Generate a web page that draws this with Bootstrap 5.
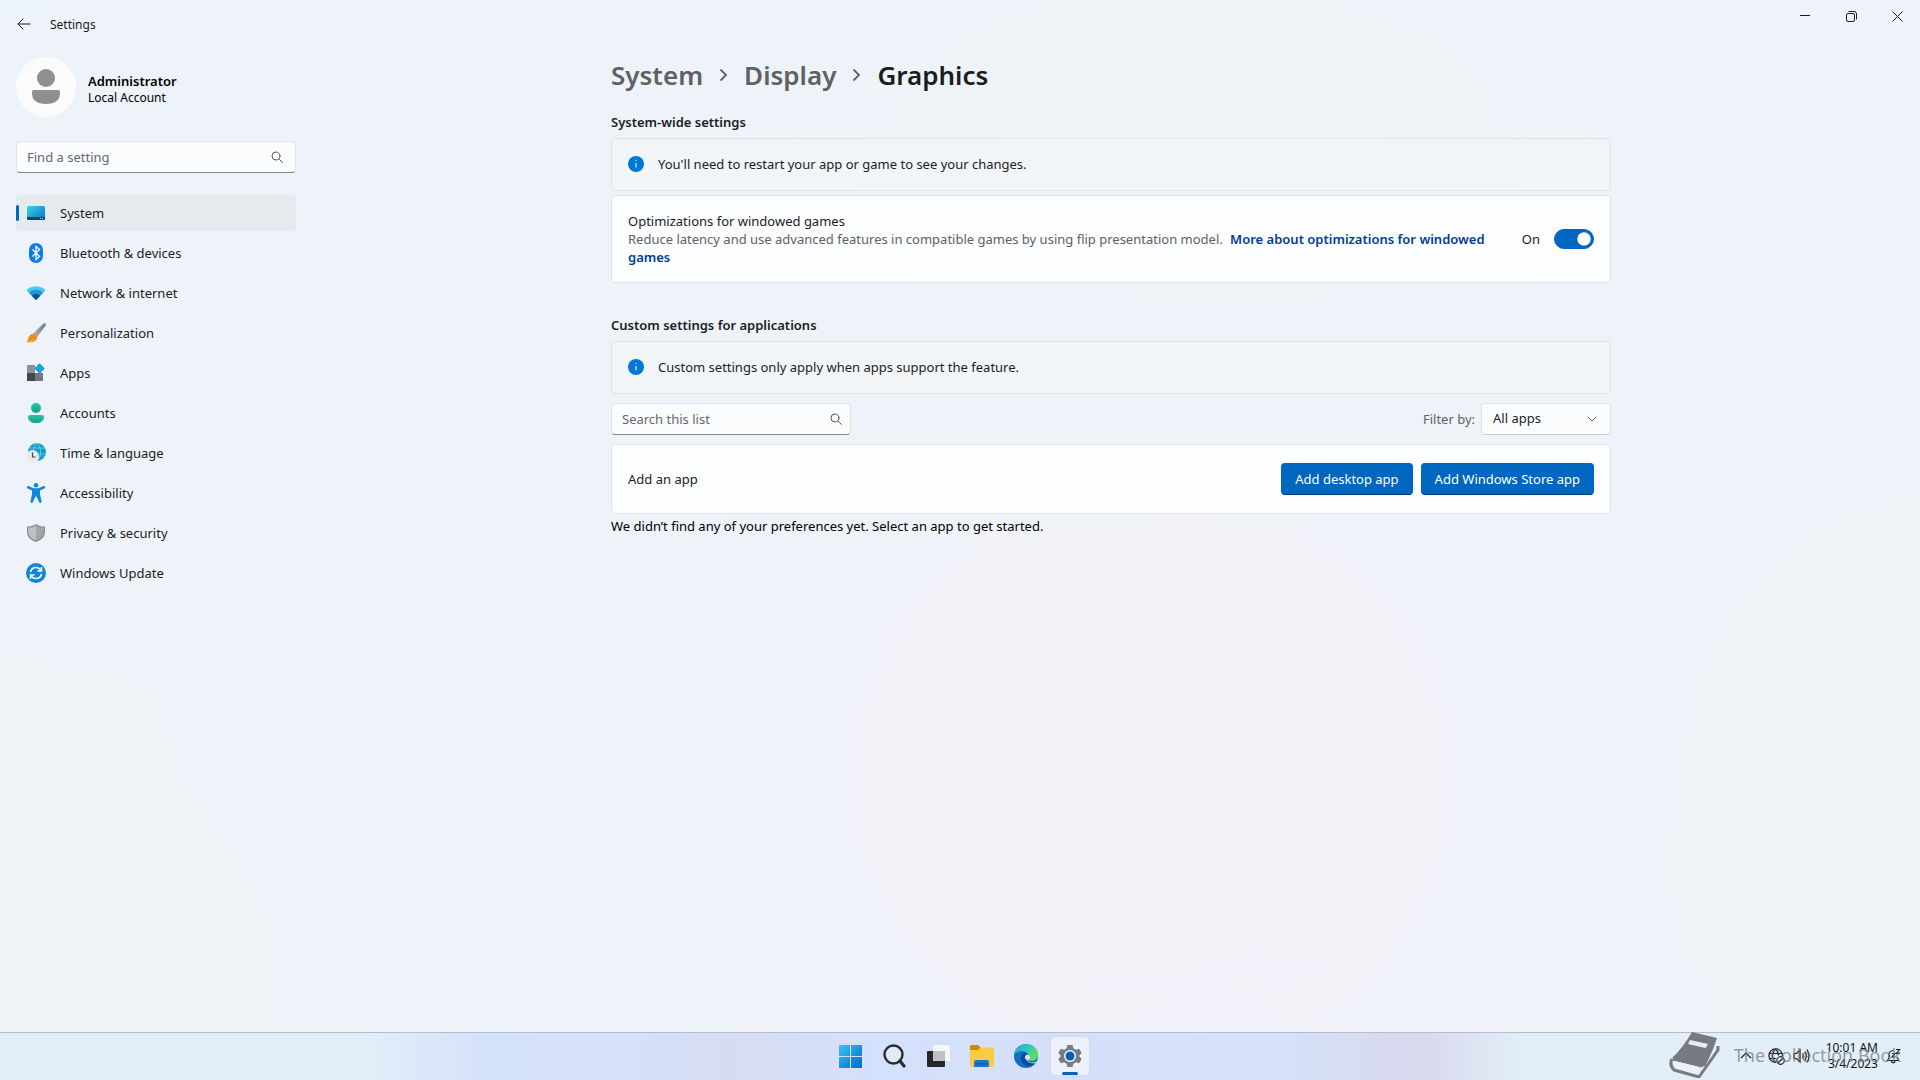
<!DOCTYPE html>
<html lang="en">
<head>
<meta charset="utf-8">
<meta name="viewport" content="width=device-width, initial-scale=1">
<title>Settings</title>
<link href="https://cdn.jsdelivr.net/npm/bootstrap@5.3.0/dist/css/bootstrap.min.css" rel="stylesheet">
<style>
  :root { --accent: #0067c0; --ink: #1b1c1e; --soft: #5f6164; --line: #dfe4e9; }
  body {
    font-family: "Noto Sans", "Open Sans", sans-serif; font-size: 13px; line-height: 20px; color: var(--ink);
    background:
      radial-gradient(ellipse 30% 50% at 60% 72%, #f2f2f7 0%, rgba(242,242,247,0) 100%),
      radial-gradient(ellipse 22% 45% at 0% 95%, #eef4f7 30%, rgba(238,244,247,0) 100%),
      radial-gradient(ellipse 20% 50% at 100% 80%, #eff4f7 30%, rgba(239,244,247,0) 100%),
      radial-gradient(ellipse 26% 22% at 62% 12%, #eff4f7 20%, rgba(239,244,247,0) 100%),
      linear-gradient(170deg, #edf3fa 0%, #eef3f9 40%, #f0f3fb 100%);
  }
  svg { display: block; flex: none; }
  .app-title { font-size: 12px; line-height: 16px; padding: 17px 0 0 18px; }
  .title-bar { height: 49px; padding: 0 16px; }
  .back-btn, .win-btn { border: 0; background: none; padding: 0; color: var(--ink); }
  .back-btn { width: 16px; height: 48px; }
  .win-btn { width: 46px; height: 32px; display: flex; align-items: center; justify-content: center; }
  .window-buttons { margin-right: -16px; }
  .side { width: 302px; padding: 8px 6px 0 16px; flex: none; }
  .avatar { width: 60px; height: 60px; background: #fbfbfc; }
  .side .user-name { font-weight: 600; color: #000; line-height: 18px; }
  .side .user-kind { font-size: 12px; color: #000; line-height: 16px; }
  .form-control, .form-select {
    height: 32px; font-size: 13px; border: 1px solid var(--line); border-radius: 4px; background-color: #fbfcfe; color: var(--ink);
  }
  .form-control { padding: 4px 34px 4px 10px; border-bottom-color: #868a8f; }
  .form-control::placeholder { color: #65686c; opacity: 1; }
  .form-select { width: 130px; padding: 4px 32px 4px 11px; border-bottom-color: #c8ccd1; background-image: none; }
  .field-icon { position: absolute; right: 13px; top: 10px; pointer-events: none; color: #55585c; }
  .side .search-field { width: 280px; margin-top: 24px; }
  .list-search { width: 240px; }
  .list-search .field-icon { right: 9px; }
  .side .nav { margin-top: 22px; gap: 4px; width: 280px; }
  .side .nav-link { height: 36px; padding: 0 10px; gap: 14px; color: var(--ink); border-radius: 4px; }
  .side .nav-pills .nav-link.active { background: #e5eaee; color: var(--ink); position: relative; }
  .side .nav-link.active::before { content: ""; position: absolute; left: 0; top: 10px; width: 3px; height: 16px; border-radius: 2px; background: var(--accent); }
  .page-body { max-width: 1000px; }
  .breadcrumb { font-size: 26px; line-height: 36px; font-weight: 600; margin: 8px 0 19px; gap: 16px; }
  .breadcrumb a { color: var(--soft); text-decoration: none; font-weight: 600; }
  .section-name { font-size: 13px; line-height: 20px; font-weight: 600; margin: 0 0 6px; }
  .info-bar, .setting-card { border: 1px solid var(--line); border-radius: 4px; }
  .info-bar { background: rgba(243,245,246,.7); height: 53px; padding: 0 16px 2px; gap: 14px; }
  .setting-card { background: rgba(255,255,255,.8); padding: 16px; }
  .setting-card.add-card { padding: 18px 16px; }
  .setting-name { line-height: 18px; }
  .setting-note { color: var(--soft); line-height: 18px; }
  .setting-note a { color: #003e92; font-weight: 600; text-decoration: none; margin-left: 4px; }
  .switch-row { gap: 14px; }
  .filter-row { gap: 6px; padding: 9px 0; }
  .filter-row label { color: var(--soft); }
  .empty-note { color: #000; margin: 0; padding-top: 2px; }
  .form-switch .form-check-input { width: 40px; height: 20px; margin: 0; float: none; border-color: var(--accent); background-color: var(--accent); }
  .btn-primary {
    --bs-btn-bg: #0067c0; --bs-btn-border-color: #0067c0; --bs-btn-border-radius: 4px;
    height: 32px; font-size: 13px; line-height: 20px; padding: 5px 13px; border-bottom-color: #003e73;
  }
  .taskbar {
    height: 48px; border-top: 1px solid #b4bfcc;
    background: linear-gradient(90deg, #e3eff8 0%, #e3eef8 19%, #d5e2fb 25%, #d5e0fa 33%, #d7dcf3 38%, #d4e1fc 46%, #d6dff8 55%, #d5e1fb 66%, #d8d9ec 74%, #e2edf7 79%, #e3eff8 100%);
  }
  .task-btn { width: 44px; height: 46px; border: 0; background: none; padding: 0; display: flex; align-items: center; justify-content: center; position: relative; }
  .task-btn .tile { width: 38px; height: 38px; border-radius: 4px; display: flex; align-items: center; justify-content: center; }
  .task-btn.running .tile { background: #ebf0fb; box-shadow: 0 0 1px #aab4c8; }
  .task-btn.running::after { content: ""; position: absolute; left: 14px; bottom: 4px; width: 16px; height: 3px; border-radius: 2px; background: var(--accent); }
  .tray { padding: 7px 19px 0 0; gap: 8px; }
  .tray-clock { font-size: 12px; line-height: 16px; text-align: right; color: #10131a; }
  .stamp { position: absolute; right: 19px; bottom: 2px; color: #777b80; pointer-events: none; gap: 14px; }
  .stamp span { font-size: 18px; line-height: 24px; opacity: .72; }
</style>
<script src="https://cdn.jsdelivr.net/npm/bootstrap@5.3.0/dist/js/bootstrap.bundle.min.js"></script>
</head>
<body class="d-flex flex-column vh-100 overflow-hidden">

<header class="title-bar d-flex align-items-start">
  <button class="back-btn d-flex align-items-center justify-content-center" type="button" aria-label="Back">
    <svg width="14" height="12" viewBox="0 0 14 12" fill="none" stroke="currentColor" stroke-linecap="round" stroke-linejoin="round"><path d="M6 1 1 6l5 5M1 6h12"/></svg>
  </button>
  <span class="app-title">Settings</span>
  <div class="window-buttons d-flex ms-auto">
    <button class="win-btn" type="button" aria-label="Minimize"><svg width="10" height="10" viewBox="0 0 10 10" stroke="currentColor"><path d="M0 4.500h10"/></svg></button>
    <button class="win-btn" type="button" aria-label="Restore"><svg width="11" height="11" viewBox="0 0 11 11" fill="none" stroke="currentColor"><rect x=".5" y="2.500" width="8" height="8" rx="1.500"/><path d="M2.500.5H8a2.500 2.500 0 0 1 2.500 2.500v5.500"/></svg></button>
    <button class="win-btn" type="button" aria-label="Close"><svg width="11" height="11" viewBox="0 0 11 11" stroke="currentColor"><path d="m.5.5 10 10M10.500.5l-10 10"/></svg></button>
  </div>
</header>

<div class="d-flex flex-grow-1">
  <aside class="side">
    <div class="d-flex align-items-center gap-2">
      <div class="avatar rounded-circle d-flex justify-content-center pt-2">
        <svg width="30" height="44" viewBox="0 0 30 44" fill="#8f8f8f"><circle cx="15" cy="13" r="9"/><path d="M3 25h24q2 0 2 2v2c0 7-7 10-14 10S1 36 1 29v-2q0-2 2-2z"/></svg>
      </div>
      <div class="ps-1 pt-1">
        <div class="user-name">Administrator</div>
        <div class="user-kind">Local Account</div>
      </div>
    </div>
    <div class="search-field position-relative">
      <input class="form-control" type="search" placeholder="Find a setting" aria-label="Find a setting">
      <svg class="field-icon" width="12" height="12" viewBox="0 0 12 12" fill="none" stroke="currentColor" stroke-linecap="round"><circle cx="5" cy="5" r="4"/><path d="m8 8 3.500 3.500"/></svg>
    </div>
    <nav class="nav nav-pills flex-column">
      <a class="nav-link active d-flex align-items-center" href="#" aria-current="page">
        <svg width="20" height="20" viewBox="0 0 20 20"><defs><linearGradient id="gs" x1="0" y1="0" x2="1" y2="1"><stop stop-color="#35d6ec"/><stop offset="1" stop-color="#0b6fc0"/></linearGradient></defs><rect x="1" y="3" width="18" height="14" rx="1.500" fill="url(#gs)"/><path d="M1 14h18v1.500q0 1.500-1.500 1.500h-15Q1 17 1 15.500z" fill="#0a4a70"/><path d="M14 15h1v1h-1zm2 0h1v1h-1z" fill="#9fe0f4"/></svg>System</a>
      <a class="nav-link d-flex align-items-center" href="#">
        <svg width="20" height="20" viewBox="0 0 20 20"><rect x="3" width="14" height="20" rx="7" fill="#0a7bea"/><path d="m6.500 6.500 7 7L10 16.500v-13l3.500 3-7 7" fill="none" stroke="#fff" stroke-width="1.300"/></svg>Bluetooth &amp; devices</a>
      <a class="nav-link d-flex align-items-center" href="#">
        <svg width="20" height="20" viewBox="0 0 20 20"><path d="M.3 7.200C5.500 1.800 14.500 1.800 19.700 7.200L10 17z" fill="#4bcbee"/><path d="M3 9.800c4-4 10-4 14 0L10 17z" fill="#1b93d8"/><path d="M5.800 12.700c2.500-2.200 5.900-2.200 8.400 0L10 17z" fill="#0b4f9e"/></svg>Network &amp; internet</a>
      <a class="nav-link d-flex align-items-center" href="#">
        <svg width="20" height="20" viewBox="0 0 20 20"><defs><linearGradient id="gp" x1="1" y1="0" x2="0" y2="1"><stop stop-color="#72777c"/><stop offset="1" stop-color="#b3b6ba"/></linearGradient></defs><path d="M19.300.6c.8.700.6 1.500.2 2.200L11.200 14l-4-3.400L17 .9c.8-.7 1.600-.9 2.300-.3z" fill="url(#gp)"/><path d="M6.700 10.800c2-.2 4.500 1.700 4.300 4-.4 3.600-4.800 5.200-10.700 4.300 2.700-2 1.700-7.800 6.400-8.300z" fill="#ef8a1d"/><path d="M.3 19.100c3-.5 5.500-1.200 7.400-4.300.5 2.500-2.200 5.200-7.400 4.300z" fill="#fbb34b"/></svg>Personalization</a>
      <a class="nav-link d-flex align-items-center" href="#">
        <svg width="20" height="20" viewBox="0 0 20 20"><path d="M1 2h8v8H1z" fill="#8d9196"/><path d="M1 10h8v8H1z" fill="#45494d"/><path d="M9 10h8v8H9z" fill="#73777c"/><rect x="9.800" y="1.700" width="7.600" height="7.600" rx=".8" transform="rotate(45 13.600 5.500)" fill="#1f9ede"/></svg>Apps</a>
      <a class="nav-link d-flex align-items-center" href="#">
        <svg width="20" height="20" viewBox="0 0 20 20"><defs><linearGradient id="ga" x1="0" y1="0" x2="0" y2="1"><stop stop-color="#27c6a4"/><stop offset="1" stop-color="#14a28b"/></linearGradient></defs><circle cx="10" cy="5" r="5" fill="url(#ga)"/><path d="M4 12h12q2 0 2 2c0 4-4 6-8 6s-8-2-8-6q0-2 2-2z" fill="url(#ga)"/></svg>Accounts</a>
      <a class="nav-link d-flex align-items-center" href="#">
        <svg width="20" height="20" viewBox="0 0 20 20"><circle cx="11" cy="9" r="9" fill="#149dcc"/><path d="M3 5h16M2.500 11h17M11 0c-5 5-5 13 0 18M11 0c5 5 5 13 0 18" stroke="#6ed4ea" fill="none" stroke-width=".8"/><circle cx="6.500" cy="13.500" r="6.500" fill="#e9eaec"/><path d="M6.500 9.500v4.500H9.500" stroke="#44484c" fill="none" stroke-width="1.200"/></svg>Time &amp; language</a>
      <a class="nav-link d-flex align-items-center" href="#">
        <svg width="20" height="20" viewBox="0 0 20 20" fill="#1287dc"><circle cx="10" cy="2.300" r="2.300"/><path d="M2.500 3.100 7.500 5.200h5l5-2.100c1.600-.4 2.200 1.600.8 2.300L14 7.600v4l1.600 7c.2 1.500-2 1.900-2.500.5L10.500 13.500h-1L6.900 19.100c-.5 1.400-2.700 1-2.500-.5L6 11.600v-4L1.700 5.400C.3 4.700.9 2.700 2.500 3.100z"/></svg>Accessibility</a>
      <a class="nav-link d-flex align-items-center" href="#">
        <svg width="20" height="20" viewBox="0 0 20 20"><path d="M10 1c3 2 6 2.500 9 2.500V9c0 5-4 8.500-9 10C5 17.500 1 14 1 9V3.500C4 3.500 7 3 10 1z" fill="#8b8f94"/><path d="M10 2.500V17.500C5.500 16 2.300 13 2.300 9V4.700c2.700 0 5.300-.7 7.700-2.200z" fill="#bfc1c4"/><path d="M10 2.500V17.500C14.500 16 17.700 13 17.700 9V4.700c-2.700 0-5.300-.7-7.700-2.200z" fill="#a2a5a9"/></svg>Privacy &amp; security</a>
      <a class="nav-link d-flex align-items-center" href="#">
        <svg width="20" height="20" viewBox="0 0 20 20"><circle cx="10" cy="10" r="10" fill="#1484d6"/><g fill="none" stroke="#fff" stroke-width="1.500"><path d="M4.500 9A5.600 5.600 0 0 1 15 7.500M15.500 11A5.600 5.600 0 0 1 5 12.500"/><path d="M15.500 4v4h-4M4.500 16v-4h4"/></g></svg>Windows Update</a>
    </nav>
  </aside>

  <main class="flex-grow-1">
    <div class="page-body mx-auto">
      <nav aria-label="breadcrumb">
        <h1 class="breadcrumb align-items-center">
          <a href="#">System</a>
          <svg width="9" height="14" viewBox="0 0 9 14" fill="none" stroke="#5f6164" stroke-width="1.800"><path d="m1.500 1.500 5.500 5.500-5.500 5.500"/></svg>
          <a href="#">Display</a>
          <svg width="9" height="14" viewBox="0 0 9 14" fill="none" stroke="#5f6164" stroke-width="1.800"><path d="m1.500 1.500 5.500 5.500-5.500 5.500"/></svg>
          <span>Graphics</span>
        </h1>
      </nav>

      <section>
        <h2 class="section-name">System-wide settings</h2>
        <div class="info-bar d-flex align-items-center">
          <svg width="16" height="16" viewBox="0 0 16 16"><circle cx="8" cy="8" r="8" fill="#0078d4"/><path d="M7.500 4h1v1h-1zM7.500 7h1v4.500h-1z" fill="#fff"/></svg>
          <span>You'll need to restart your app or game to see your changes.</span>
        </div>
        <div class="setting-card d-flex align-items-center mt-1">
          <div class="flex-grow-1 pe-4">
            <label class="setting-name d-block" for="windowed">Optimizations for windowed games</label>
            <div class="setting-note">Reduce latency and use advanced features in compatible games by using flip presentation model. <a href="#">More about optimizations for windowed games</a></div>
          </div>
          <div class="form-check form-switch switch-row d-flex align-items-center p-0 m-0">
            <label for="windowed">On</label>
            <input class="form-check-input" type="checkbox" role="switch" id="windowed" checked>
          </div>
        </div>
      </section>

      <section class="mt-4 pt-2">
        <h2 class="section-name">Custom settings for applications</h2>
        <div class="info-bar d-flex align-items-center">
          <svg width="16" height="16" viewBox="0 0 16 16"><circle cx="8" cy="8" r="8" fill="#0078d4"/><path d="M7.500 4h1v1h-1zM7.500 7h1v4.500h-1z" fill="#fff"/></svg>
          <span>Custom settings only apply when apps support the feature.</span>
        </div>
        <div class="filter-row d-flex align-items-center">
          <div class="list-search position-relative">
            <input class="form-control" type="search" placeholder="Search this list" aria-label="Search this list">
            <svg class="field-icon" width="12" height="12" viewBox="0 0 12 12" fill="none" stroke="currentColor" stroke-linecap="round"><circle cx="5" cy="5" r="4"/><path d="m8 8 3.500 3.500"/></svg>
          </div>
          <label class="ms-auto" for="filter">Filter by:</label>
          <div class="position-relative">
            <select class="form-select" id="filter"><option>All apps</option></select>
            <svg class="field-icon" width="12" height="12" viewBox="0 0 12 12" fill="none" stroke="currentColor" stroke-linecap="round"><path d="m2 4 4 4 4-4"/></svg>
          </div>
        </div>
        <div class="setting-card add-card d-flex align-items-center gap-2">
          <span class="me-auto">Add an app</span>
          <button class="btn btn-primary" type="button">Add desktop app</button>
          <button class="btn btn-primary" type="button">Add Windows Store app</button>
        </div>
        <p class="empty-note">We didn’t find any of your preferences yet. Select an app to get started.</p>
      </section>
    </div>
  </main>
</div>

<footer class="taskbar row g-0 position-relative align-items-start">
  <div class="col"></div>
  <div class="col-auto d-flex">
    <button class="task-btn" type="button" aria-label="Start"><span class="tile"><svg width="24" height="24" viewBox="0 0 24 24"><defs><linearGradient id="gw" x1="0" y1="0" x2="1" y2="1"><stop stop-color="#3cc3f5"/><stop offset="1" stop-color="#0068c9"/></linearGradient></defs><path d="M1 1h11v11H1zM13 1h11v11H13zM1 13h11v11H1zM13 13h11v11H13z" fill="url(#gw)"/></svg></span></button>
    <button class="task-btn" type="button" aria-label="Search"><span class="tile"><svg width="24" height="24" viewBox="0 0 24 24" fill="none" stroke="#2b2d35"><circle cx="11.500" cy="10.500" r="9" stroke-width="2.400" fill="#e3e9f7"/><path d="m18 17 4 5" stroke-width="3.200" stroke-linecap="round"/></svg></span></button>
    <button class="task-btn" type="button" aria-label="Task view"><span class="tile"><svg width="24" height="24" viewBox="0 0 24 24"><rect x="1" y="7" width="18" height="16" rx="1" fill="#25262a"/><rect x="7" y="1" width="17" height="16" rx="1" fill="#f7f7f9"/><path d="M7 7h12v10H7z" fill="#bfc0c2"/></svg></span></button>
    <button class="task-btn" type="button" aria-label="File Explorer"><span class="tile"><svg width="24" height="24" viewBox="0 0 24 24"><path d="M0 2.500Q0 1 1.500 1H8l2.500 2.500V7H0z" fill="#c98a06"/><path d="M0 6h8l2.500-2.500h12Q24 3.500 24 5v16.500q0 1.500-1.500 1.500h-21Q0 23 0 21.500z" fill="#fccb44"/><path d="M4 23v-5q0-2 2-2h11q2 0 2 2v5z" fill="#1479cc"/><path d="M7 19h9v1.500H7z" fill="#0c5ea8"/></svg></span></button>
    <button class="task-btn" type="button" aria-label="Edge"><span class="tile"><svg width="24" height="24" viewBox="0 0 24 24"><defs><linearGradient id="ge" x1="0" y1="0" x2="1" y2=".5"><stop stop-color="#2a9fdc"/><stop offset=".5" stop-color="#30c3c6"/><stop offset="1" stop-color="#62df58"/></linearGradient></defs><circle cx="12" cy="12" r="12" fill="#0f6fc4"/><path d="M0 11C1 4 6 0 12 0c7 0 12 5 12 10.500 0 4-3 6.500-6.500 6.500-2.500 0-4-1-4-2 0-.8 1-1.200 1-3 0-2.500-2.500-4.800-6-4.800C4 7.200 1 9 0 11z" fill="url(#ge)"/><path d="M9 9.500C5 12 7 21 13.500 22c3 .4 6.500-.8 8.700-4-4 1.800-9 .5-10.200-3.500-.6-2 .3-3.500.6-4C12 9.500 10.500 8.700 9 9.500z" fill="#0c4c97"/><path d="M13 15c.8 3.500 5.500 4.500 9.200 2.800.3-.2.600.1.400.4l-.4.500c-4 1.300-9 .3-10.200-4z" fill="#d5e2fa"/><circle cx="13.500" cy="13.300" r="2.600" fill="#d5e2fa"/></svg></span></button>
    <button class="task-btn running" type="button" aria-label="Settings"><span class="tile"><svg width="24" height="24" viewBox="0 0 24 24"><path d="M9.500 1h5l.9 3.300 2.500 1.400 3.300-.9 2.500 4.300-2.400 2.400v1l2.400 2.400-2.500 4.300-3.300-.9-2.500 1.400-.9 3.300h-5l-.9-3.300-2.500-1.400-3.300.9L.3 14.900l2.400-2.400v-1L.3 9.100l2.500-4.300 3.300.9 2.500-1.400z" fill="#767c85"/><circle cx="12" cy="12" r="6" fill="#f4f7fc"/><circle cx="12" cy="12" r="4.500" fill="#0b5cab"/></svg></span></button>
  </div>
  <div class="col">
    <div class="tray d-flex justify-content-end align-items-center">
      <svg width="12" height="12" viewBox="0 0 12 12" fill="none" stroke="#1b1c1e" stroke-width="1.200" class="me-2"><path d="m1 8 5-5 5 5"/></svg>
      <svg width="17" height="17" viewBox="0 0 17 17" fill="none" stroke="#1b1c1e" stroke-width="1.200"><path d="M8 14.500A6.800 6.800 0 1 1 14.500 8M1 5.500h13M1 10.500h7M7.500 1c-4 4-4 9.500 0 13.500M7.500 1c2 2 3 4.500 3 6.500"/><circle cx="12.500" cy="12.500" r="3.800"/><path d="m10 15 5-5"/></svg>
      <svg width="17" height="16" viewBox="0 0 17 16" fill="none" stroke="#1b1c1e" stroke-width="1.200"><path d="M1 5.500h2.500L7 2v12L3.500 10.500H1zM9.500 5.500q1.500 2.500 0 5M11.800 3.500q3 4.500 0 9M14 1.500q4 6.500 0 13"/></svg>
      <div class="tray-clock ps-2">10:01 AM<br>3/4/2023</div>
      <svg width="15" height="16" viewBox="0 0 15 16" fill="none" stroke="#1b1c1e" stroke-width="1.200"><path d="M7.500 2.500c-3 0-4.500 2-4.500 4.500v3L1.500 12.500h11L11.500 10V9M5.500 13c0 2.500 3.500 2.500 3.500 0M10 1.500h3.500l-3 4H14M6 5.500h3l-3 3.500h3"/></svg>
    </div>
  </div>
  <div class="stamp d-flex align-items-center w-auto p-0">
    <svg width="51" height="46" viewBox="0 0 51 46"><path d="M23 0 48 6Q44 19 36 34L3 26Q13 17 23 0z" fill="#777b80"/><path d="M21 8 39 12q-2 4-3 4l-17-4z" fill="#e3eff8"/><path d="M3 27Q0 33 5 38l25 7L49 18V14M4 27l27 7 5-2" fill="none" stroke="#777b80" stroke-width="3" stroke-linejoin="round"/><path d="M6 29 31 35Q29 38 30 42L7 36Q4 33 6 29z" fill="#e9f1f9"/></svg>
    <span>The Collection Book</span>
  </div>
</footer>
</body>
</html>
